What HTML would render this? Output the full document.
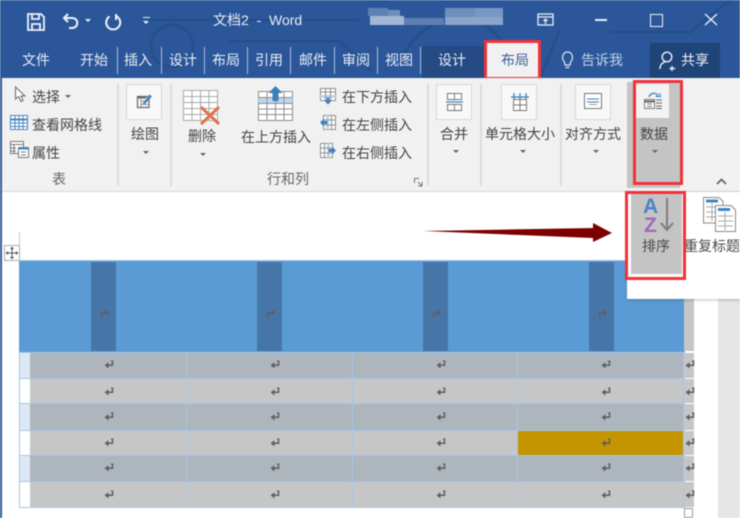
<!DOCTYPE html>
<html><head><meta charset="utf-8"><style>
html,body{margin:0;padding:0}
body{width:740px;height:518px;overflow:hidden;position:relative;background:#fff;font-family:"Liberation Sans","Noto Sans CJK SC",sans-serif;color:#444}
#wrap{position:absolute;left:0;top:0;width:740px;height:518px;overflow:hidden;filter:blur(.4px)}
.a,.t,.b{position:absolute}
.t{white-space:nowrap;font-size:14px;line-height:18px}
.c{transform:translateX(-50%)}
.w{color:#e8edf5}
.b{box-sizing:border-box}
.sep{position:absolute;width:2px;background:#dcdcdc;top:84px;height:102px}
.tsep{position:absolute;width:1px;background:#a9bcd8;top:47px;height:27px}
.ib{position:absolute;box-sizing:border-box;width:36px;height:36px;top:84px;background:#f8f8f8;border:1px solid #d6d6d6}
.ar{position:absolute;width:0;height:0;border-left:3.5px solid transparent;border-right:3.5px solid transparent;border-top:3.5px solid #666}
svg{position:absolute;overflow:visible}
.ret{width:10px;height:10px}
.d{background:#adb5bd}.l{background:#c6c6c6}
.r1{top:353px;height:25px}.r2{top:379px;height:24px}.r3{top:404px;height:26px}.r4{top:431px;height:24px}.r5{top:456px;height:25px}.r6{top:482px;height:25px}
.c0{left:20px;width:10px}.c1{left:30px;width:156px}.c2{left:187px;width:165px}.c3{left:353px;width:164px}.c4{left:518px;width:165px}.c5{left:684px;width:10px}
</style></head><body><div id="wrap">
<svg width="0" height="0" style="position:absolute"><defs>
<symbol id="r" viewBox="0 0 10 10"><path d="M8.500 .8V5.200H2.500" fill="none" stroke="#5f5f5f" stroke-width="1.500"/><path d="M6.800 1H9.500" stroke="#5f5f5f"/><path d="M4.500 2.300L.6 5.200L4.500 8.500Z" fill="#5f5f5f"/></symbol>
</defs></svg>

<!-- title bar -->
<div class="a" style="left:0;top:0;width:740px;height:78px;background:#2b579a"></div>
<svg style="left:0;top:0" width="740" height="78" fill="none" stroke="#26508c" stroke-width="3">
<circle cx="172" cy="46" r="21"/><path d="M148 20H360M228 41H340L372 72M400 60C430 5 480 10 500 40M610 32H690L730 0M560 30L540 78"/>
</svg>
<svg style="left:27px;top:13px" width="18" height="18" fill="none" stroke="#eef2f8" stroke-width="1.800"><path d="M1 1H14L17 4V17H1Z"/><path d="M5 1V6H12V1M5 17V11H13V17"/></svg>
<svg style="left:62px;top:13px" width="18" height="17" fill="none" stroke="#eef2f8" stroke-width="2"><path d="M3 5H10C17 5 17 15 10 15H7"/><path d="M6 1L2 5L6 9"/></svg>
<div class="ar" style="left:85px;top:19px;border-top-color:#e8edf5"></div>
<svg style="left:105px;top:13px" width="16" height="17" fill="none" stroke="#eef2f8" stroke-width="2"><path d="M4.500 3.500A7 7 0 1 0 11 3M11 1V7"/></svg>
<div class="a" style="left:143px;top:17px;width:7px;height:1px;background:#e8edf5"></div>
<div class="ar" style="left:143px;top:21px;border-top-color:#e8edf5"></div>
<div class="t w" style="left:213px;top:11px">文档2 &nbsp;- &nbsp;Word</div>
<!-- pixelated blur -->
<div class="a" style="left:368px;top:8px;width:20px;height:8px;background:#5f80b2"></div>
<div class="a" style="left:370px;top:16px;width:34px;height:9px;background:#a3b7d5"></div>
<div class="a" style="left:388px;top:10px;width:12px;height:6px;background:#6f8fbd"></div>
<div class="a" style="left:404px;top:18px;width:40px;height:7px;background:#5b7fb1"></div>
<div class="a" style="left:445px;top:8px;width:30px;height:9px;background:#6f8fbd"></div>
<div class="a" style="left:445px;top:17px;width:58px;height:8px;background:#8aa4ca"></div>
<div class="a" style="left:475px;top:8px;width:28px;height:9px;background:#7897c2"></div>
<svg style="left:537px;top:13px" width="17" height="13" fill="none" stroke="#e8edf5" stroke-width="1.300"><rect x="1" y="1" width="15" height="11"/><path d="M1 4H16M8.500 11V6M6.500 8L8.500 6L10.500 8"/></svg>
<div class="a" style="left:595px;top:19px;width:12px;height:1.500px;background:#e8edf5"></div>
<div class="a" style="left:650px;top:14px;width:11px;height:11px;border:1.500px solid #eef2f8"></div>
<svg style="left:705px;top:14px" width="13" height="12" stroke="#e8edf5" stroke-width="1.400"><path d="M0 0L12 11M12 0L0 11"/></svg>

<!-- tabs -->
<div class="t w" style="left:22px;top:51px">文件</div>
<div class="t w" style="left:80px;top:51px">开始</div><div class="tsep" style="left:117px"></div>
<div class="t w" style="left:124px;top:51px">插入</div><div class="tsep" style="left:161px"></div>
<div class="t w" style="left:169px;top:51px">设计</div><div class="tsep" style="left:204px"></div>
<div class="t w" style="left:212px;top:51px">布局</div><div class="tsep" style="left:247px"></div>
<div class="t w" style="left:255px;top:51px">引用</div><div class="tsep" style="left:290px"></div>
<div class="t w" style="left:299px;top:51px">邮件</div><div class="tsep" style="left:334px"></div>
<div class="t w" style="left:342px;top:51px">审阅</div><div class="tsep" style="left:377px"></div>
<div class="t w" style="left:385px;top:51px">视图</div><div class="tsep" style="left:420px"></div>
<div class="a" style="left:422px;top:46px;width:62px;height:32px;background:#254a84"></div>
<div class="t w" style="left:438px;top:51px">设计</div>
<div class="a" style="left:484px;top:42px;width:57px;height:36px;background:#f1f1f1"></div>
<div class="t" style="left:501px;top:51px;color:#3d5f97">布局</div>
<div class="b" style="left:484px;top:40px;width:57px;height:40px;border:3px solid #f0323a"></div>
<svg style="left:561px;top:51px" width="13" height="18" fill="none" stroke="#dfe6f1" stroke-width="1.200"><path d="M3.500 11C0 7.500 1.500 1 6.500 1S13 7.500 9.500 11L9 14H4ZM4.500 16.500H8.500"/></svg>
<div class="t" style="left:581px;top:51px;color:#c4d1e5">告诉我</div>
<div class="a" style="left:650px;top:43px;width:70px;height:35px;background:#1f4478"></div>
<svg style="left:659px;top:51px" width="18" height="20" fill="none" stroke="#eef2f8" stroke-width="1.400"><circle cx="8" cy="6" r="4.800"/><path d="M1 18C1 13 4 11.500 6 11M13 15V20M10.500 17.500H16"/></svg>
<div class="t" style="left:681px;top:51px;color:#f2f5fa">共享</div>

<!-- ribbon -->
<div class="a" style="left:0;top:78px;width:740px;height:114px;background:#f1f1f1;border-bottom:1px solid #d8d8d8;box-sizing:border-box"></div>
<div class="a" style="left:0;top:78px;width:1.500px;height:440px;background:#2b579a"></div>
<div class="sep" style="left:117px"></div>
<div class="sep" style="left:170px"></div>
<div class="sep" style="left:427px"></div>
<div class="sep" style="left:480px"></div>
<div class="sep" style="left:560px"></div>

<!-- group 表 -->
<svg style="left:14px;top:86px" width="12" height="17" fill="#fff" stroke="#666"><path d="M1.500 1V13L4.500 10.500L7 15.500L9 14.500L7 10H11Z"/></svg>
<div class="t" style="left:32px;top:88px">选择</div><div class="ar" style="left:65px;top:95px"></div>
<svg style="left:10px;top:115px" width="18" height="16" fill="#fff" stroke="#4a86c5"><rect x=".5" y=".5" width="17" height="14"/><path d="M.5 4.500H17.500" stroke-width="2"/><path d="M.5 8H17.500M.5 11.500H17.500M5 .5V14.500M9 .5V14.500M13 .5V14.500"/></svg>
<div class="t" style="left:32px;top:116px">查看网格线</div>
<svg style="left:10px;top:141px" width="19" height="17" fill="#fff" stroke="#777"><rect x=".5" y=".5" width="13" height="12"/><path d="M.5 3.500H13.500M.5 7H6M.5 10H6M4 3.500V12"/><rect x="8.500" y="6.500" width="10" height="10" fill="#fff"/><path d="M8.500 7.500H18.500" stroke="#3f86c6" stroke-width="2"/><path d="M11 11H16M11 14H16" /></svg>
<div class="t" style="left:32px;top:144px">属性</div>
<div class="t c" style="left:59px;top:170px;color:#666">表</div>

<!-- 绘图 -->
<div class="ib" style="left:126px"></div>
<svg style="left:136px;top:92px" width="18" height="18" fill="none"><path d="M1.500 4.500H13V15.500H1.500Z" stroke="#666" stroke-width="1.200"/><path d="M1.500 5.500H10" stroke="#666" stroke-width="2"/><path d="M5 9H12M5 12.500H12M5 6V15" stroke="#999"/><path d="M6.500 11.500L13.500 2.500L16 4.500L8.500 12.500Z" fill="#3f86c6"/></svg>
<div class="t c" style="left:145px;top:125px">绘图</div><div class="ar" style="left:143px;top:151px"></div>

<!-- 删除 -->
<svg style="left:183px;top:90px" width="38" height="42" fill="#fff" stroke="#a8a8a8"><rect x=".5" y=".5" width="34" height="30"/><path d="M.5 6.500H34.500M.5 12.500H34.500M.5 18.500H34.500M.5 24.500H34.500M9 .5V30.500M17.500 .5V30.500M26 .5V30.500"/><path d="M18 17L36 34M36 17L18 34" stroke="#e0714f" stroke-width="3"/></svg>
<div class="t c" style="left:202px;top:127px">删除</div><div class="ar" style="left:200px;top:153px"></div>

<!-- 行和列 -->
<svg style="left:258px;top:86px" width="36" height="36" fill="#fff" stroke="#8f8f8f"><rect x=".5" y="5.500" width="34" height="29"/><rect x=".5" y="11.500" width="34" height="6" fill="#bcd7ee" stroke="none"/><path d="M.5 11.500H34.500M.5 17.500H34.500M.5 23H34.500M.5 28.500H34.500M9 5.500V34.500M17.500 5.500V34.500M26 5.500V34.500"/><path d="M17.500 0L24.500 7H20.500V15H14.500V7H10.500Z" fill="#3f7fb9" stroke="none"/></svg>
<div class="t c" style="left:276px;top:128px">在上方插入</div>
<svg style="left:320px;top:88px" width="16" height="17" fill="#fff" stroke="#8f8f8f"><rect x=".5" y=".5" width="15" height="12"/><rect x=".5" y="7" width="15" height="3" fill="#bcd7ee" stroke="none"/><path d="M.5 4H15.500M5.500 .5V12.500M10.500 .5V12.500"/><path d="M8 16.500L4 12.500H6.500V9.500H9.500V12.500H12Z" fill="#3f7fb9" stroke="none"/></svg>
<div class="t" style="left:342px;top:88px">在下方插入</div>
<svg style="left:320px;top:115px" width="16" height="16" fill="#fff" stroke="#8f8f8f"><rect x="3.500" y=".5" width="12" height="14"/><rect x="6" y=".5" width="3" height="14" fill="#bcd7ee" stroke="none"/><path d="M3.500 5H15.500M3.500 10H15.500M11.500 .5V14.500"/><path d="M0 7.500L4 3.500V6H7.500V9H4V11.500Z" fill="#3f7fb9" stroke="none"/></svg>
<div class="t" style="left:342px;top:116px">在左侧插入</div>
<svg style="left:320px;top:143px" width="16" height="16" fill="#fff" stroke="#8f8f8f"><rect x=".5" y=".5" width="12" height="14"/><rect x="7" y=".5" width="3" height="14" fill="#bcd7ee" stroke="none"/><path d="M.5 5H12.500M.5 10H12.500M4.500 .5V14.500"/><path d="M16 7.500L12 3.500V6H8.500V9H12V11.500Z" fill="#3f7fb9" stroke="none"/></svg>
<div class="t" style="left:342px;top:144px">在右侧插入</div>
<div class="t c" style="left:288px;top:170px;color:#666">行和列</div>
<svg style="left:414px;top:178px" width="9" height="9" fill="none" stroke="#777"><path d="M.5 5V.5H5M4 4L8 8M8 4V8H4"/></svg>

<!-- 合并 -->
<div class="ib" style="left:436px"></div>
<svg style="left:446px;top:92px" width="17" height="20" fill="#fff" stroke="#777"><rect x="1.500" y="1.500" width="14" height="6"/><rect x="1.500" y="12.500" width="14" height="6"/><path d="M8.500 1.500V7.500M8.500 12.500V18.500"/><path d="M0 10H17" stroke="#3f86c6" stroke-width="1.300"/></svg>
<div class="t c" style="left:454px;top:125px">合并</div><div class="ar" style="left:453px;top:150px"></div>

<!-- 单元格大小 -->
<div class="ib" style="left:501px"></div>
<svg style="left:511px;top:92px" width="18" height="20" fill="#fff" stroke="#777"><rect x="2.500" y="7.500" width="13" height="11"/><path d="M2.500 13H15.500M9 7.500V18.500"/><path d="M0 5H18M3 1V7M9 1V7M15 1V7" stroke="#3f7fb9" stroke-width="1.200"/></svg>
<div class="t c" style="left:520px;top:125px">单元格大小</div><div class="ar" style="left:520px;top:150px"></div>

<!-- 对齐方式 -->
<div class="ib" style="left:575px"></div>
<svg style="left:584px;top:93px" width="18" height="17" fill="#fff" stroke="#777"><rect x=".5" y=".5" width="17" height="15"/><path d="M3 6H15" stroke="#3f7fb9"/><path d="M3 9H15" stroke="#3f7fb9"/><path d="M5 11.500H13" stroke="#999"/></svg>
<div class="t c" style="left:593px;top:125px">对齐方式</div><div class="ar" style="left:593px;top:150px"></div>

<!-- 数据 -->
<div class="a" style="left:627px;top:82px;width:53px;height:106px;background:#c4c4c4"></div>
<div class="a" style="left:635px;top:84px;width:34px;height:34px;background:#f3f3f3"></div>
<svg style="left:644px;top:92px" width="20" height="20" fill="#fff" stroke="#777"><rect x=".5" y="7.500" width="10" height="9"/><path d="M.5 9.500H10.500" stroke="#666" stroke-width="2"/><path d="M3 12H8M3 14.500H8" /><path d="M12 8H18M12 11H18M12 14H18M12 16.500H18" stroke="#666" fill="none"/><path d="M5 5C6.500 .5 12 0 14 4" stroke="#3f7fb9" fill="none" stroke-width="1.300"/><path d="M11.500 4.500H16.500L15.500 1" stroke="#3f7fb9" fill="none"/></svg>
<div class="t c" style="left:654px;top:125px">数据</div><div class="ar" style="left:652px;top:150px"></div>
<div class="b" style="left:633px;top:80px;width:50px;height:105px;border:3px solid #f0323a"></div>
<svg style="left:716px;top:178px" width="11" height="7" fill="none" stroke="#666" stroke-width="1.800"><path d="M1 6L5.500 1.500L10 6"/></svg>

<!-- doc ruler -->
<div class="a" style="left:19px;top:232px;width:1px;height:30px;background:#c8c8c8"></div>
<div class="b" style="left:4px;top:245px;width:16px;height:16px;border:1px solid #aaa;background:#fff"></div>
<svg style="left:6px;top:247px" width="12" height="12" fill="none" stroke="#555" stroke-width="1"><path d="M6 0V12M0 6H12"/><path d="M4.500 2L6 .5L7.500 2M4.500 10L6 11.500L7.500 10M2 4.500L.5 6L2 7.500M10 4.500L11.500 6L10 7.500"/></svg>

<!-- scrollbar -->
<div class="a" style="left:718px;top:299px;width:22px;height:219px;background:#e6e6e6"></div>

<!-- table -->
<div class="a" style="left:19px;top:260px;width:666px;height:93px;background:#5b9bd5;border-top:1px solid #a6c6e8;box-sizing:border-box"></div>
<div class="a" style="left:91px;top:262px;width:25px;height:89px;background:#4676a8"></div>
<div class="a" style="left:257px;top:262px;width:25px;height:89px;background:#4676a8"></div>
<div class="a" style="left:423px;top:262px;width:25px;height:89px;background:#4676a8"></div>
<div class="a" style="left:589px;top:262px;width:25px;height:89px;background:#4676a8"></div>
<svg class="ret" style="left:100px;top:308px;transform:scale(-1,-1)"><use href="#r"/></svg>
<svg class="ret" style="left:266px;top:308px;transform:scale(-1,-1)"><use href="#r"/></svg>
<svg class="ret" style="left:432px;top:308px;transform:scale(-1,-1)"><use href="#r"/></svg>
<svg class="ret" style="left:598px;top:308px;transform:scale(-1,-1)"><use href="#r"/></svg>

<div class="a" style="left:684px;top:299px;width:10px;height:52px;background:#c6c6c6"></div>

<!-- rows background -->
<div class="a" style="left:19px;top:352px;width:666px;height:156px;background:#a6c6e8"></div>
<div class="a r1 c0" style="background:#dde8f4"></div><div class="a r2 c0" style="background:#fff"></div><div class="a r3 c0" style="background:#dde8f4"></div><div class="a r4 c0" style="background:#fff"></div><div class="a r5 c0" style="background:#dde8f4"></div><div class="a r6 c0" style="background:#fff"></div>

<div class="a d r1 c1"></div><div class="a d r1 c2"></div><div class="a d r1 c3"></div><div class="a d r1 c4"></div>
<div class="a l r2 c1"></div><div class="a l r2 c2"></div><div class="a l r2 c3"></div><div class="a l r2 c4"></div>
<div class="a d r3 c1"></div><div class="a d r3 c2"></div><div class="a d r3 c3"></div><div class="a d r3 c4"></div>
<div class="a l r4 c1"></div><div class="a l r4 c2"></div><div class="a l r4 c3"></div><div class="a r4 c4" style="background:#c49500"></div>
<div class="a d r5 c1"></div><div class="a d r5 c2"></div><div class="a d r5 c3"></div><div class="a d r5 c4"></div>
<div class="a l r6 c1"></div><div class="a l r6 c2"></div><div class="a l r6 c3"></div><div class="a l r6 c4"></div>

<!-- right marks column -->
<div class="a l r1 c5"></div><div class="a l r2 c5"></div><div class="a l r3 c5"></div><div class="a l r4 c5"></div><div class="a l r5 c5"></div><div class="a l r6 c5"></div>
<div class="b" style="left:684px;top:508px;width:9px;height:10px;border:1px solid #999;background:#fff"></div>

<!-- return marks -->
<svg class="ret" style="left:104px;top:360px"><use href="#r"/></svg><svg class="ret" style="left:270px;top:360px"><use href="#r"/></svg><svg class="ret" style="left:436px;top:360px"><use href="#r"/></svg><svg class="ret" style="left:601px;top:360px"><use href="#r"/></svg><svg class="ret" style="left:685px;top:360px"><use href="#r"/></svg>
<svg class="ret" style="left:104px;top:387px"><use href="#r"/></svg><svg class="ret" style="left:270px;top:387px"><use href="#r"/></svg><svg class="ret" style="left:436px;top:387px"><use href="#r"/></svg><svg class="ret" style="left:601px;top:387px"><use href="#r"/></svg><svg class="ret" style="left:685px;top:387px"><use href="#r"/></svg>
<svg class="ret" style="left:104px;top:412px"><use href="#r"/></svg><svg class="ret" style="left:270px;top:412px"><use href="#r"/></svg><svg class="ret" style="left:436px;top:412px"><use href="#r"/></svg><svg class="ret" style="left:601px;top:412px"><use href="#r"/></svg><svg class="ret" style="left:685px;top:412px"><use href="#r"/></svg>
<svg class="ret" style="left:104px;top:438px"><use href="#r"/></svg><svg class="ret" style="left:270px;top:438px"><use href="#r"/></svg><svg class="ret" style="left:436px;top:438px"><use href="#r"/></svg><svg class="ret" style="left:601px;top:438px"><use href="#r"/></svg><svg class="ret" style="left:685px;top:438px"><use href="#r"/></svg>
<svg class="ret" style="left:104px;top:463px"><use href="#r"/></svg><svg class="ret" style="left:270px;top:463px"><use href="#r"/></svg><svg class="ret" style="left:436px;top:463px"><use href="#r"/></svg><svg class="ret" style="left:601px;top:463px"><use href="#r"/></svg><svg class="ret" style="left:685px;top:463px"><use href="#r"/></svg>
<svg class="ret" style="left:104px;top:490px"><use href="#r"/></svg><svg class="ret" style="left:270px;top:490px"><use href="#r"/></svg><svg class="ret" style="left:436px;top:490px"><use href="#r"/></svg><svg class="ret" style="left:601px;top:490px"><use href="#r"/></svg><svg class="ret" style="left:685px;top:490px"><use href="#r"/></svg>

<!-- popup -->
<div class="a" style="left:627px;top:192px;width:113px;height:107px;background:#fff;box-shadow:0 1px 3px rgba(0,0,0,.25)"></div>
<div class="a" style="left:631px;top:194px;width:51px;height:80px;background:#c4c4c4"></div>
<div class="t" style="left:643px;top:196px;font-size:21px;line-height:21px;font-weight:bold;color:#4a86c5">A</div>
<div class="t" style="left:644px;top:215px;font-size:21px;line-height:21px;font-weight:bold;color:#9c6cbb">Z</div>
<svg style="left:660px;top:198px" width="14" height="35" fill="none" stroke="#7d7d7d" stroke-width="2"><path d="M7 0V32M1 25L7 32L13 25"/></svg>
<div class="t c" style="left:656px;top:237px;color:#4a4a4a">排序</div>
<div class="b" style="left:625px;top:191px;width:61px;height:89px;border:3px solid #f0323a"></div>
<svg style="left:703px;top:197px" width="34" height="36" fill="#fff" stroke="#8a8a8a"><path d="M.5 .5H16L20 4.500V26H.5Z"/><path d="M3 4H15" stroke="#3f86c6" stroke-width="3"/><path d="M3 10H15M3 15H15M3 20H15M9 6V24" stroke="#aaa"/><path d="M12.500 8.500H28L32.500 13V34.500H12.500Z"/><path d="M15 12.500H27" stroke="#3f86c6" stroke-width="3"/><path d="M15 19H30M15 24H30M15 29H30M22 15V33" stroke="#aaa"/></svg>
<div class="t" style="left:684px;top:237px;color:#4a4a4a">重复标题</div>

<!-- red arrow -->
<svg style="left:0;top:0" width="740" height="518"><path d="M423 231L593 228V223L612 233L593 242V238Z" fill="#7d0000"/></svg>
</div></body></html>
